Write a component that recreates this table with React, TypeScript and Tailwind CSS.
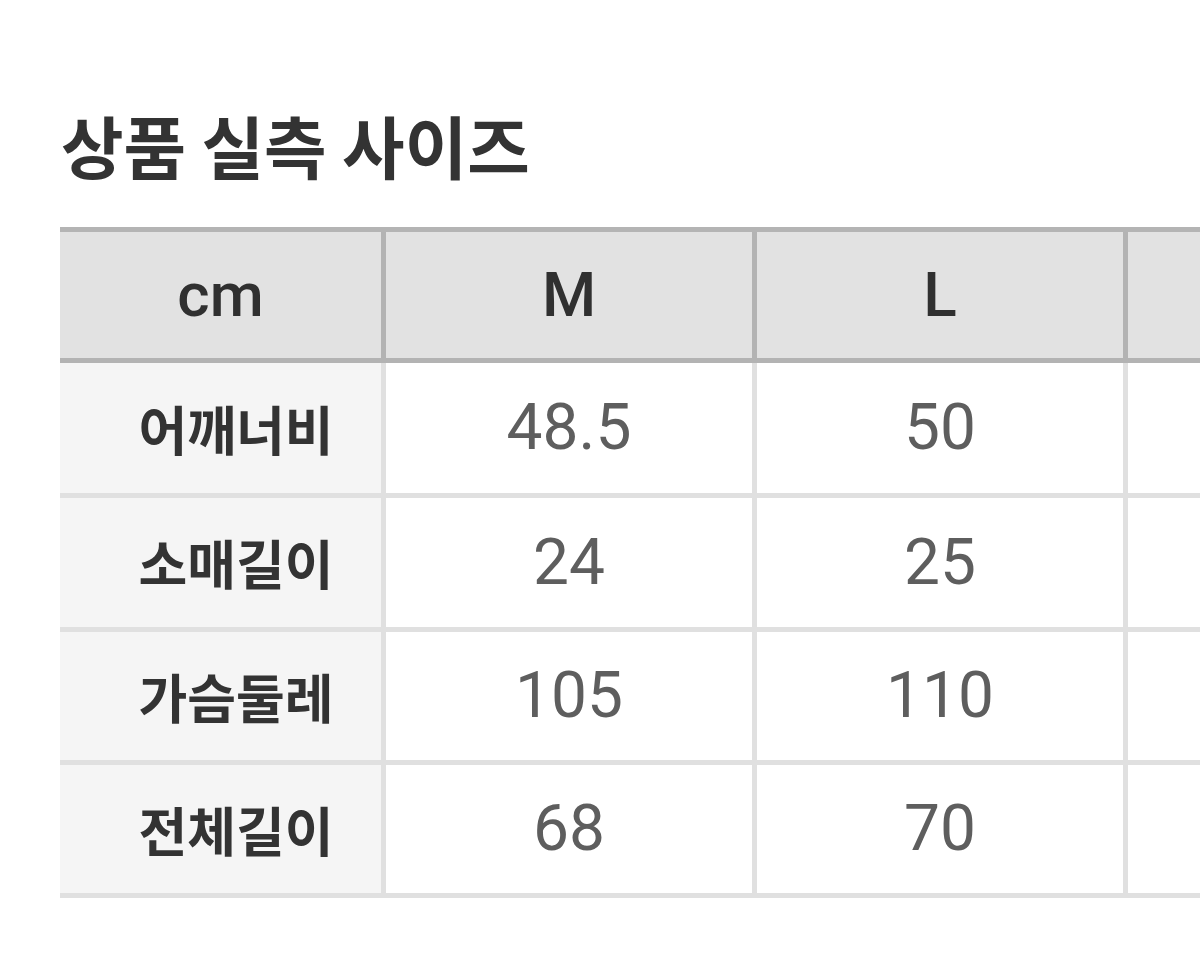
import React from "react";

const FONT = { fontFamily: "Roboto, 'Noto Sans CJK KR', 'Noto Sans', sans-serif" };
const KFONT = { fontFamily: "'Noto Sans CJK KR', 'Noto Sans', sans-serif" };

const sizes = ["M", "L", ""];
const rows: { label: string; values: string[]; h: string }[] = [
  { label: "어깨너비", values: ["48.5", "50", ""], h: "h-[135px]" },
  { label: "소매길이", values: ["24", "25", ""], h: "h-[134px]" },
  { label: "가슴둘레", values: ["105", "110", ""], h: "h-[133px]" },
  { label: "전체길이", values: ["68", "70", ""], h: "h-[133px]" },
];

export default function App() {
  return (
    <div className="w-[1200px] h-[964px] overflow-hidden bg-white" style={FONT}>
      <div className="pl-[61px] pt-[111px]">
        <h1
          className="h-[68px] text-[68px] leading-none font-bold text-[#333333] whitespace-nowrap"
          style={KFONT}
        >
          상품 실측 사이즈
        </h1>
      </div>
      <div className="mt-[48px] ml-[60px] w-[1439px] border-t-[5px] border-[#b4b4b4]">
        <div className="grid grid-cols-[326px_371px_371px_371px] h-[131px]">
          <div className="flex items-center justify-center bg-[#e2e2e2] border-r-[5px] border-b-[5px] border-[#b3b3b3] text-[62px] leading-none font-medium text-[#303030]">
            cm
          </div>
          {sizes.map((s, i) => (
            <div
              key={i}
              className="flex items-center justify-center bg-[#e2e2e2] border-r-[5px] border-b-[5px] border-[#b3b3b3] text-[62px] leading-none font-medium text-[#303030]"
            >
              {s}
            </div>
          ))}
        </div>
        {rows.map((r) => (
          <div key={r.label} className={`grid grid-cols-[326px_371px_371px_371px] ${r.h}`}>
            <div
              className="flex items-center justify-center pl-[31px] bg-[#f5f5f5] border-r-[5px] border-b-[5px] border-[#e0e0e0] text-[53px] leading-none font-bold text-[#333333]"
              style={KFONT}
            >
              {r.label}
            </div>
            {r.values.map((v, i) => (
              <div
                key={i}
                className="flex items-center justify-center bg-white border-r-[5px] border-b-[5px] border-[#e0e0e0] text-[64px] leading-none font-normal text-[#5e5e5e]"
              >
                {v}
              </div>
            ))}
          </div>
        ))}
      </div>
    </div>
  );
}
